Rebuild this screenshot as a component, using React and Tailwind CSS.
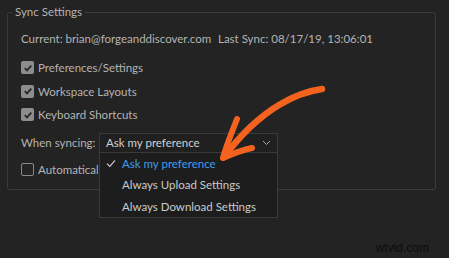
import React from "react";

function Check({ checked }) {
  return (
    <span
      className={
        "w-[13px] h-[13px] rounded-[2px] flex items-center justify-center shrink-0 " +
        (checked ? "bg-[#8d8d8d]" : "border-[1.5px] border-[#8a8a8a]")
      }
    >
      {checked && (
        <svg width="10" height="10" viewBox="0 0 10 10">
          <path d="M1.8 5.2 L4 7.4 L8.3 2.6" fill="none" stroke="#2a2a2a" strokeWidth="1.8" />
        </svg>
      )}
    </span>
  );
}

export default function App() {
  const font = { fontFamily: "Lato, 'Open Sans', sans-serif" };
  return (
    <div
      className="w-[449px] h-[258px] bg-[#232323] relative overflow-hidden pt-[5px] px-[7px] text-[11.5px] text-[#b4b4b4]"
      style={font}
    >
      <fieldset className="border border-[#3a3a3a] rounded-[2px] w-[429px] h-[185px] px-[13px]">
        <legend className="px-[3px] -ml-[9px] leading-[14px] text-[#b4b4b4]">Sync Settings</legend>

        <div className="mt-[10px] h-[20px] flex items-center">
          <span className="w-[197px]">Current: brian@forgeanddiscover.com</span>
          <span>Last Sync: 08/17/19, 13:06:01</span>
        </div>

        <div className="mt-[7px]">
          {["Preferences/Settings", "Workspace Layouts", "Keyboard Shortcuts"].map((t) => (
            <div key={t} className="h-[23.5px] flex items-center gap-[4px]">
              <Check checked />
              <span>{t}</span>
            </div>
          ))}
        </div>

        <div className="mt-[6px] h-[20px] flex items-center">
          <span className="w-[78px]">When syncing:</span>
          <div className="relative w-[179px] h-[20px]">
            <div className="h-full border border-[#3a3a3a] bg-[#202020] flex items-center justify-between pl-[6px] pr-[6px] text-[#d0d0d0]">
              <span>Ask my preference</span>
              <svg width="9" height="6" viewBox="0 0 9 6">
                <path d="M1 1 L4.5 4.5 L8 1" fill="none" stroke="#a8a8a8" strokeWidth="1" />
              </svg>
            </div>
            <div className="absolute left-0 top-full w-full h-[65px] bg-[#1d1d1d] border border-[#3a3a3a] border-t-0 z-10 flex flex-col text-[#cacaca]">
              <div className="h-[22px] flex items-center">
                <span className="w-[22px] flex justify-center">
                  <svg width="10" height="9" viewBox="0 0 10 9">
                    <path d="M1 4.6 L3.8 7.4 L9 1.4" fill="none" stroke="#c8c8c8" strokeWidth="1.3" />
                  </svg>
                </span>
                <span className="text-[#3f9ceb]">Ask my preference</span>
              </div>
              <div className="h-[22px] flex items-center pl-[22px]">Always Upload Settings</div>
              <div className="h-[21px] flex items-center pl-[22px]">Always Download Settings</div>
            </div>
          </div>
        </div>

        <div className="mt-[7px] h-[20px] flex items-center gap-[4px]">
          <Check checked={false} />
          <span className="w-[60px] overflow-hidden whitespace-nowrap">Automatically sync settings</span>
        </div>
      </fieldset>

      <svg className="absolute left-0 top-0 z-20 pointer-events-none" width="449" height="258" viewBox="0 0 449 258">
        <path
          d="M322 89 C 300 92, 262 106, 224 157"
          fill="none"
          stroke="#f4621f"
          strokeWidth="6.5"
          strokeLinecap="round"
        />
        <path
          d="M237 119 C 232 132, 226 146, 223 158 C 232 154, 242 150, 252 148"
          fill="none"
          stroke="#f4621f"
          strokeWidth="6"
          strokeLinecap="round"
          strokeLinejoin="round"
        />
      </svg>

      <div
        className="absolute right-[20px] bottom-[4px] leading-none text-[12px] text-[#0d0d0d]"
        style={{ fontFamily: "'Liberation Sans', Arial, sans-serif" }}
      >
        wtvid.com
      </div>
    </div>
  );
}
